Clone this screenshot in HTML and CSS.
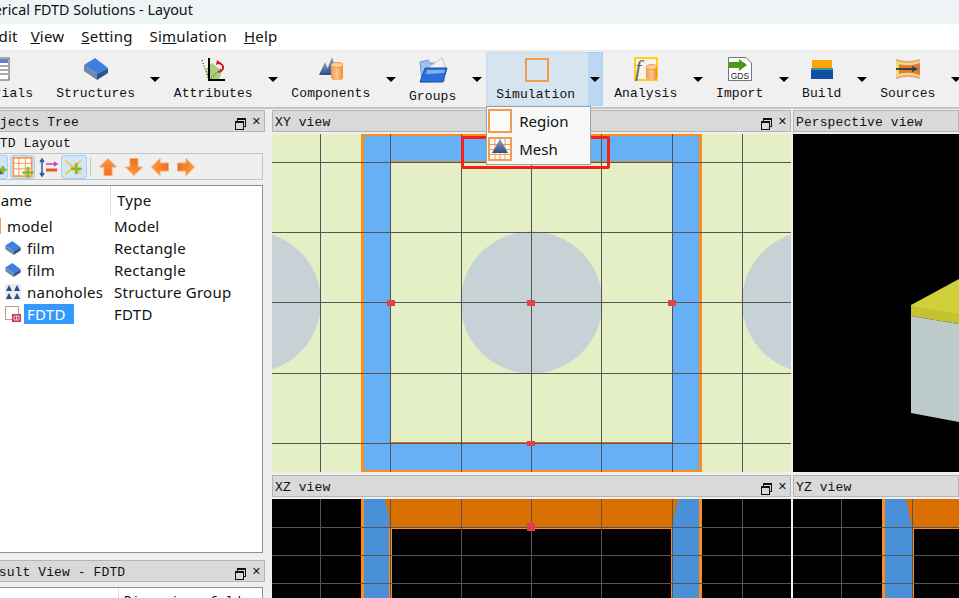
FILE: index.html
```html
<!DOCTYPE html>
<html lang="en">
<head>
    <meta charset="UTF-8">
    <meta name="viewport" content="width=device-width, initial-scale=1.0">
    <title>Lumerical FDTD Solutions - Layout</title>
    <link rel="stylesheet" href="styles.css">
</head>
<body>
    <svg class="defs" width="0" height="0">
        <defs>
            <linearGradient id="arrowFill" x1="0" y1="0" x2="0" y2="1">
                <stop offset="0" stop-color="#fb9a3c"/>
                <stop offset="1" stop-color="#ee6f1c"/>
            </linearGradient>
            <linearGradient id="cylFill" x1="0" y1="0" x2="1" y2="0">
                <stop offset="0" stop-color="#f59a4c"/>
                <stop offset="0.5" stop-color="#fcc48c"/>
                <stop offset="1" stop-color="#f08a34"/>
            </linearGradient>
            <linearGradient id="triFill" x1="0" y1="0" x2="0" y2="1">
                <stop offset="0" stop-color="#8fa5c9"/>
                <stop offset="1" stop-color="#2f4d85"/>
            </linearGradient>
            <symbol id="box" viewBox="0 0 24 22">
                <polygon points="0,7 11,0 24,10 13,16" fill="#3e7fe0"/>
                <polygon points="0,7 13,16 13,22 0,13" fill="#7287a8"/>
                <polygon points="13,16 24,10 24,15 13,22" fill="#2f5488"/>
            </symbol>
            <symbol id="arrow" viewBox="0 0 18 18">
                <polygon points="9,0.500 17.500,9 13,9 13,17.500 5,17.500 5,9 0.500,9" fill="url(#arrowFill)" stroke="#f7a878"/>
            </symbol>
        </defs>
    </svg>

    <div class="titlebar"><span class="title-text">Lumerical FDTD Solutions - Layout</span></div>

    <nav class="menubar">
        <span class="menu menu-file">Edit</span>
        <span class="menu"><u>V</u>iew</span>
        <span class="menu"><u>S</u>etting</span>
        <span class="menu">Si<u>m</u>ulation</span>
        <span class="menu"><u>H</u>elp</span>
    </nav>

    <div class="toolbar">
        <div class="tool tool-first">
            <svg class="tool-icon" viewBox="0 0 24 24">
                <rect x="1" y="1" width="22" height="22" fill="#fff" stroke="#555"/>
                <rect x="2" y="2" width="20" height="4" fill="#5b83c9"/>
                <path d="M2 9h20M2 13h20M2 17h20" stroke="#aaa" stroke-width="2"/>
            </svg>
            <span class="tool-label">Materials</span>
        </div>

        <div class="tool">
            <svg class="tool-icon" viewBox="0 0 24 24"><use href="#box" y="1" width="24" height="22"/></svg>
            <span class="tool-label">Structures</span>
        </div>
        <div class="drop"><i class="caret"></i></div>

        <div class="tool">
            <svg class="tool-icon" viewBox="0 0 24 24">
                <polygon points="5,12 11,6 16,10 21,14 18,23 7,23" fill="#a8d07c"/>
                <path d="M8 1v22h17" fill="none" stroke="#000" stroke-width="2"/>
                <path d="M1 3l7 20M8 23l13-12" fill="none" stroke="#000" stroke-dasharray="1 2"/>
                <path d="M16 6a5 4 0 1 1 1 9" fill="none" stroke="#d0161c" stroke-width="2"/>
                <polygon points="16,3 20,6 15,8" fill="#d0161c"/>
            </svg>
            <span class="tool-label">Attributes</span>
        </div>
        <div class="drop"><i class="caret"></i></div>

        <div class="tool">
            <svg class="tool-icon" viewBox="0 0 24 24">
                <polygon points="0,18 6,5 12,18" fill="url(#triFill)"/>
                <polygon points="6,18 13,0 19,18" fill="url(#triFill)"/>
                <rect x="12" y="6" width="12" height="17" rx="3" fill="url(#cylFill)"/>
                <ellipse cx="18" cy="8" rx="6" ry="2.500" fill="#fbd09c" stroke="#f0953f"/>
            </svg>
            <span class="tool-label">Components</span>
        </div>
        <div class="drop"><i class="caret"></i></div>

        <div class="tool tool-groups">
            <svg class="tool-icon folder-icon" viewBox="0 0 30 28">
                <polygon points="2,5 10,3 12,6 25,6 26,24 4,25" fill="#9ec2e8" stroke="#6b9ad0"/>
                <polygon points="11,10 24,1 28,12 18,16" fill="#eef2f7" stroke="#b9c4d2"/>
                <polygon points="7,11 29,11 25,25 2,25" fill="#2a6fdc" stroke="#1d4fa8"/>
                <polygon points="9,13 27,13 26,16 8,17" fill="#7fb2f0"/>
            </svg>
            <span class="tool-label">Groups</span>
        </div>
        <div class="drop drop-groups"><i class="caret"></i></div>

        <div class="tool tool-active">
            <span class="sim-icon"></span>
            <span class="tool-label">Simulation</span>
            <div class="popup">
                <div class="popup-item">
                    <span class="sim-icon sim-icon-small"></span>
                    <span>Region</span>
                </div>
                <div class="popup-item">
                    <svg class="popup-icon" viewBox="0 0 24 24">
                        <rect x="1" y="1" width="22" height="22" fill="#fafafa" stroke="#f59a4c" stroke-width="2"/>
                        <path d="M1 7.500h22M1 12.500h22M1 17.500h22M7 1v22M12 1v22M17 1v22" stroke="#f59a4c"/>
                        <polygon points="12,2 20,16 4,16" fill="url(#triFill)"/>
                    </svg>
                    <span>Mesh</span>
                </div>
            </div>
        </div>
        <div class="drop drop-active"><i class="caret"></i></div>

        <div class="tool">
            <svg class="tool-icon" viewBox="0 0 24 24">
                <rect x="1" y="1" width="22" height="22" fill="#f6f4ea" stroke="#fbd21e" stroke-width="2"/>
                <text x="1" y="19" class="f-glyph">f</text>
                <rect x="12" y="9" width="11" height="14" rx="3" fill="url(#cylFill)"/>
                <ellipse cx="17.500" cy="10" rx="5.500" ry="2.500" fill="#fbd09c" stroke="#f0953f"/>
            </svg>
            <span class="tool-label">Analysis</span>
        </div>
        <div class="drop"><i class="caret"></i></div>

        <div class="tool">
            <svg class="tool-icon" viewBox="0 0 24 24">
                <polygon points="0.500,0.500 18,0.500 23.500,6 23.500,23.500 0.500,23.500" fill="#fff" stroke="#777"/>
                <polygon points="1,5 11,5 11,2 19,8 11,14 11,11 1,11" fill="#4f9a12"/>
                <text x="12" y="22" class="gds-glyph">GDS</text>
            </svg>
            <span class="tool-label">Import</span>
        </div>
        <div class="drop"><i class="caret"></i></div>

        <div class="tool">
            <svg class="tool-icon" viewBox="0 0 24 24">
                <rect x="2" y="3" width="20" height="8" fill="#ffa40e"/>
                <rect x="1" y="11" width="22" height="2" fill="#2d9f86"/>
                <rect x="1" y="13" width="22" height="9" fill="#124da6"/>
            </svg>
            <span class="tool-label">Build</span>
        </div>
        <div class="drop"><i class="caret"></i></div>

        <div class="tool">
            <svg class="tool-icon" viewBox="0 0 24 24">
                <path d="M0 2q12 4 24 0v20q-12-4-24 0z" fill="#eaa688"/>
                <path d="M0 4q12 4 24 0v16q-12-4-24 0z" fill="#f2dc6c"/>
                <path d="M3 7q9 3 21 -1v12q-12-4-21 -1z" fill="#e07a3a"/>
                <path d="M0 11h16v-2l6 3-6 3v-2H0z" fill="#33414f"/>
            </svg>
            <span class="tool-label">Sources</span>
        </div>
        <div class="drop"><i class="caret"></i></div>
    </div>

    <main class="workspace">
        <aside class="sidebar">
            <div class="dock-title dock-title-side">
                <span class="side-text">Objects Tree</span>
                <span class="dock-buttons"><i class="float-btn"></i><span class="close-btn">&#10005;</span></span>
            </div>
            <div class="layout-name">FDTD Layout</div>
            <div class="tree-tools">
                <span class="tree-btn">
                    <svg viewBox="0 0 24 24"><polygon points="12,4 21,20 3,20" fill="url(#triFill)"/><path d="M16 15h8M20 11v8" stroke="#8ab82c" stroke-width="3"/></svg>
                </span>
                <span class="tree-btn">
                    <svg viewBox="0 0 24 24">
                        <rect x="2" y="2" width="20" height="20" fill="#fafafa" stroke="#f59a4c" stroke-width="2"/>
                        <path d="M2 8h20M2 14h20M8 2v20M15 2v20" stroke="#f59a4c"/>
                        <path d="M12 18h12M18 12v12" stroke="#8ab82c" stroke-width="3"/>
                    </svg>
                </span>
                <span class="tree-plain">
                    <svg viewBox="0 0 20 20">
                        <path d="M3 3v15M1 5l2-3 2 3M1 16l2 3 2-3" fill="none" stroke="#2f5a9a" stroke-width="1.500"/>
                        <path d="M7 7h11M15 5l3 2-3 2" fill="none" stroke="#c83cc8" stroke-width="1.500"/>
                        <path d="M7 13h11" stroke="#e05a1e" stroke-width="3"/>
                    </svg>
                </span>
                <span class="tree-btn tree-btn-add">
                    <svg viewBox="0 0 24 24">
                        <path d="M3 5l17 14M3 20L20 5" stroke="#f2cc2e" stroke-width="2"/>
                        <path d="M9 14h12M15 8v12" stroke="#8ab82c" stroke-width="3"/>
                    </svg>
                </span>
                <span class="tree-sep"></span>
                <svg class="move-icon"><use href="#arrow"/></svg>
                <svg class="move-icon flip-down"><use href="#arrow"/></svg>
                <svg class="move-icon flip-left"><use href="#arrow"/></svg>
                <svg class="move-icon flip-right"><use href="#arrow"/></svg>
            </div>
            <div class="tree">
                <div class="tree-head">
                    <span class="col-name head-name"><span class="head-text">Name</span></span>
                    <span class="col-type">Type</span>
                </div>
                <div class="tree-row">
                    <span class="col-name name-root"><i class="root-icon"></i>model</span>
                    <span class="col-type">Model</span>
                </div>
                <div class="tree-row">
                    <span class="col-name"><svg class="row-icon"><use href="#box" width="16" height="14" y="1"/></svg>film</span>
                    <span class="col-type">Rectangle</span>
                </div>
                <div class="tree-row">
                    <span class="col-name"><svg class="row-icon"><use href="#box" width="16" height="14" y="1"/></svg>film</span>
                    <span class="col-type">Rectangle</span>
                </div>
                <div class="tree-row">
                    <span class="col-name">
                        <svg class="row-icon" viewBox="0 0 16 16">
                            <rect width="16" height="16" fill="#e8ebef"/>
                            <path d="M4 1l3 6H1zM12 1l3 6H9zM4 9l3 6H1zM12 9l3 6H9z" fill="#2f4d85"/>
                        </svg>
                        nanoholes
                    </span>
                    <span class="col-type">Structure Group</span>
                </div>
                <div class="tree-row">
                    <span class="col-name">
                        <svg class="row-icon" viewBox="0 0 16 16">
                            <rect x="0.500" y="0.500" width="13" height="13" fill="#fff" stroke="#c49a84"/>
                            <rect x="7" y="8" width="9" height="8" fill="#b8405e"/>
                            <path d="M9 10h5v4H9zM11.500 10v4" fill="none" stroke="#e8c8d4"/>
                        </svg>
                        <span class="selected">FDTD</span>
                    </span>
                    <span class="col-type">FDTD</span>
                </div>
            </div>
            <div class="dock-title dock-title-side result-title">
                <span class="result-text">Result View - FDTD</span>
                <span class="dock-buttons"><i class="float-btn"></i><span class="close-btn">&#10005;</span></span>
            </div>
            <div class="result-table">
                <span class="result-col"></span>
                <span class="result-head">Dimension of ld</span>
            </div>
        </aside>

        <section class="views">
            <div class="view">
                <div class="dock-title">
                    <span>XY view</span>
                    <span class="dock-buttons"><i class="float-btn"></i><span class="close-btn">&#10005;</span></span>
                </div>
                <svg class="canvas canvas-top" viewBox="272 134 519 338" shape-rendering="crispEdges">
                    <rect x="272" y="134" width="519" height="338" fill="#e5efc5"/>
                    <path d="M361 134h341v338H361z" fill="#ff8c1a"/>
                    <path d="M364 136h335v334H364z" fill="#66b0f5"/>
                    <path d="M390 161h283v283H390z" fill="#e08a2a"/>
                    <path d="M391 163h281v280H391z" fill="#e5efc5"/>
                    <path d="M391 442h281v2H391z" fill="#f06a10"/>
                    <g shape-rendering="auto" fill="#c7d2d6">
                        <circle cx="250" cy="302" r="71"/>
                        <circle cx="531.500" cy="302.500" r="71"/>
                        <circle cx="813" cy="302" r="71"/>
                    </g>
                    <path d="M320.500 134v338M390.500 134v338M461.500 134v338M531.500 134v338M601.500 134v338M672.500 134v338M742.500 134v338M272 162.500h519M272 232.500h519M272 302.500h519M272 373.500h519M272 443.500h519" stroke="#555" fill="none"/>
                    <g fill="#e2404c">
                        <rect x="387" y="300" width="8" height="6"/>
                        <rect x="527" y="300" width="8" height="6"/>
                        <rect x="668" y="300" width="8" height="6"/>
                        <rect x="527" y="441" width="8" height="5"/>
                    </g>
                </svg>
            </div>
            <div class="view">
                <div class="dock-title"><span>Perspective view</span></div>
                <svg class="canvas canvas-top" viewBox="793 134 166 338">
                    <rect x="793" y="134" width="166" height="338" fill="#000"/>
                    <polygon points="911,305 959,279 959,316 911,308" fill="#cfd03a"/>
                    <polygon points="911,306 959,314 959,324 911,316" fill="#c5c232"/>
                    <polygon points="911,316 959,324 959,422 911,413" fill="#bccaca"/>
                </svg>
            </div>
            <div class="view">
                <div class="dock-title">
                    <span>XZ view</span>
                    <span class="dock-buttons"><i class="float-btn"></i><span class="close-btn">&#10005;</span></span>
                </div>
                <svg class="canvas canvas-bottom" viewBox="272 499 519 99" shape-rendering="crispEdges">
                    <rect x="272" y="499" width="519" height="99" fill="#000"/>
                    <rect x="361" y="499" width="31" height="99" fill="#ff8c1a"/>
                    <rect x="671" y="499" width="31" height="99" fill="#ff8c1a"/>
                    <rect x="364" y="499" width="25" height="99" fill="#4a90d9"/>
                    <rect x="673" y="499" width="26" height="99" fill="#4a90d9"/>
                    <rect x="389" y="499" width="283" height="28" fill="#d96f00"/>
                    <rect x="392" y="527" width="279" height="2" fill="#ff8c1a"/>
                    <g shape-rendering="auto" fill="#d96f00">
                        <polygon points="385,499 391,499 391,527"/>
                        <polygon points="678,499 672,499 672,527"/>
                    </g>
                    <path d="M320.500 499v99M390.500 499v99M461.500 499v99M531.500 499v99M601.500 499v99M672.500 499v99M742.500 499v99M272 527.500h519M272 555.500h519M272 583.500h519" stroke="#555" fill="none"/>
                    <rect x="527" y="523" width="8" height="8" fill="#e8385a"/>
                </svg>
            </div>
            <div class="view">
                <div class="dock-title"><span>YZ view</span></div>
                <svg class="canvas canvas-bottom" viewBox="793 499 166 99" shape-rendering="crispEdges">
                    <rect x="793" y="499" width="166" height="99" fill="#000"/>
                    <rect x="882" y="499" width="32" height="99" fill="#ff8c1a"/>
                    <rect x="885" y="499" width="27" height="99" fill="#4a90d9"/>
                    <rect x="913" y="499" width="46" height="28" fill="#d96f00"/>
                    <rect x="913" y="527" width="46" height="2" fill="#ff8c1a"/>
                    <polygon points="906,499 912,499 912,527" fill="#d96f00" shape-rendering="auto"/>
                    <path d="M841.500 499v99M912.500 499v99M793 527.500h166M793 555.500h166M793 583.500h166" stroke="#555" fill="none"/>
                </svg>
            </div>
        </section>
    </main>

    <div class="callout"></div>
</body>
</html>
```

FILE: styles.css
```css
* {
    box-sizing: border-box;
}
body {
    margin: 0;
    width: 959px;
    height: 598px;
    overflow: hidden;
    position: relative;
    display: flex;
    flex-direction: column;
    background-color: #efefef;
    font-family: "Noto Sans", sans-serif;
    color: #111;
}
.defs {
    position: absolute;
}

.titlebar {
    height: 24px;
    flex: none;
    background-color: #eff5f6;
    overflow: hidden;
    white-space: nowrap;
    font-size: 14.3px;
    line-height: 19px;
}
.title-text {
    display: block;
    margin-left: -36px;
}

.menubar {
    height: 27px;
    flex: none;
    display: flex;
    background-color: #fff;
    border-bottom: 1px solid #e8e8e8;
    font-size: 15px;
    letter-spacing: .2px;
    line-height: 25px;
    white-space: nowrap;
}
.menu {
    margin-right: 17px;
}
.menu-file {
    margin-left: -10px;
    margin-right: 13px;
}

.toolbar {
    height: 57px;
    flex: none;
    display: flex;
    margin-top: 1px;
    background-color: #f0f0f0;
    border-bottom: 2px solid #c4c4c4;
    font-family: "Liberation Mono", monospace;
    font-size: 13px;
    letter-spacing: .1px;
    white-space: nowrap;
}
.tool {
    flex: none;
    height: 54px;
    padding: 5px 10px 0;
    display: flex;
    flex-direction: column;
    align-items: center;
    position: relative;
}
.tool-first {
    margin-left: -48px;
    margin-right: 3px;
}
.tool-icon {
    width: 24px;
    height: 24px;
    flex: none;
}
.tool-label {
    margin-top: 5px;
    line-height: 16px;
}
.folder-icon {
    width: 30px;
    height: 28px;
}
.tool-groups .tool-label {
    margin-top: 4px;
}
.drop {
    flex: none;
    width: 18.6px;
    height: 54px;
    padding-top: 25px;
    padding-left: 2px;
    display: flex;
    justify-content: center;
}
.caret {
    width: 0;
    height: 0;
    border-left: 5px solid transparent;
    border-right: 5px solid transparent;
    border-top: 5px solid #000;
}
.drop-groups {
    width: 19.8px;
}
.tool-active {
    padding: 5px 13px 0 9px;
    background-color: #d6e4f0;
    border: 1px solid #c2dcf2;
    border-right: none;
}
.tool-active .sim-icon {
    margin-left: 3px;
}
.drop-active {
    width: 15px;
    padding-top: 24px;
    padding-left: 0;
    background-color: #bcd8f0;
    border: 1px solid #a6d0f4;
    border-left: none;
    margin-right: 1px;
}
.sim-icon {
    width: 24px;
    height: 24px;
    flex: none;
    border: 2px solid #f59a4c;
    display: block;
}
.tool-active .popup .sim-icon {
    margin-left: 0;
}
.sim-icon-small {
    background-color: #fafafa;
}

.popup {
    position: absolute;
    z-index: 2;
    top: 53px;
    left: -1px;
    width: 105px;
    height: 59px;
    padding: 2px 1px;
    background-color: #f8f8f8;
    border: 1px solid #a0a0a0;
    font-family: "Noto Sans", sans-serif;
    font-size: 15px;
    letter-spacing: 0;
}
.popup-item {
    height: 28px;
    display: flex;
    align-items: flex-start;
    gap: 7px;
    line-height: 25px;
}
.popup-icon {
    width: 24px;
    height: 24px;
    flex: none;
}

.workspace {
    flex: 1;
    min-height: 0;
    display: flex;
    padding-top: 1px;
}
.sidebar {
    width: 272px;
    flex: none;
    overflow: hidden;
}
.dock-title {
    height: 22px;
    display: flex;
    align-items: center;
    justify-content: space-between;
    padding: 2px 0 0 2px;
    background-color: #d9d9d9;
    border: 1px solid #b4b4b4;
    font-family: "Liberation Mono", monospace;
    font-size: 13px;
    letter-spacing: .1px;
    white-space: nowrap;
    overflow: hidden;
}
.dock-title-side {
    width: 265px;
    border-left: none;
    padding-left: 0;
}
.side-text {
    margin-left: -16px;
}
.dock-buttons {
    display: flex;
    align-items: center;
    gap: 7px;
    margin-right: 3px;
}
.float-btn {
    width: 9px;
    height: 9px;
    position: relative;
}
.float-btn::before,
.float-btn::after {
    content: "";
    position: absolute;
    width: 7px;
    height: 6px;
    border: 1px solid #111;
    border-top-width: 2px;
    background-color: #d9d9d9;
}
.float-btn::before {
    top: 0;
    left: 2px;
}
.float-btn::after {
    top: 3px;
    left: 0;
}
.close-btn {
    font-size: 11px;
    font-weight: bold;
    line-height: 12px;
    margin-left: 1px;
    font-family: "DejaVu Sans", sans-serif;
    color: #111;
}

.layout-name {
    height: 21px;
    margin-left: -16px;
    font-family: "Liberation Mono", monospace;
    font-size: 13px;
    letter-spacing: .1px;
    line-height: 23px;
    white-space: nowrap;
}
.tree-tools {
    width: 280px;
    height: 27px;
    display: flex;
    align-items: center;
    margin-left: -17px;
    border: 1px solid #c4c4c4;
    border-left: none;
}
.tree-btn {
    width: 25px;
    height: 24px;
    flex: none;
    background-color: #d2e6f7;
    border: 1px solid #a6d0f4;
    border-radius: 3px;
    margin-right: 2px;
    display: block;
}
.tree-btn svg {
    display: block;
    width: 23px;
    height: 22px;
}
.tree-plain {
    width: 20px;
    height: 20px;
    flex: none;
    margin: 0 2px 0 2px;
}
.tree-plain svg {
    display: block;
}
.tree-btn-add {
    width: 26px;
    margin-right: 3px;
}
.tree-sep {
    width: 1px;
    height: 20px;
    background-color: #c8c8c8;
    margin-right: 8px;
    flex: none;
}
.move-icon {
    width: 18px;
    height: 18px;
    flex: none;
    margin-right: 8px;
}
.flip-down {
    transform: rotate(180deg);
}
.flip-left {
    transform: rotate(-90deg);
}
.flip-right {
    transform: rotate(90deg);
}
.tree {
    width: 263px;
    height: 368px;
    margin-top: 5px;
    background-color: #fff;
    border: 1px solid #8a9299;
    border-left: none;
    font-size: 15px;
    letter-spacing: .25px;
    white-space: nowrap;
    overflow: hidden;
}
.tree-head {
    height: 29px;
    display: flex;
    align-items: flex-start;
}
.tree-head .col-name {
    height: 29px;
    width: 111px;
    margin-right: 6px;
    padding-left: 0;
    border-right: 1px solid #dedede;
    align-items: flex-start;
    line-height: 28px;
}
.tree-head .col-type {
    line-height: 28px;
}
.head-text {
    margin-left: -11px;
}
.tree-row {
    height: 22px;
    display: flex;
    align-items: center;
    line-height: 22px;
}
.col-name {
    width: 114px;
    flex: none;
    display: flex;
    align-items: center;
    padding-left: 5px;
}
.name-root {
    padding-left: 0;
}
.root-icon {
    width: 1px;
    height: 16px;
    background-color: #f59a4c;
    margin-right: 6px;
}
.row-icon {
    width: 16px;
    height: 16px;
    flex: none;
    margin-right: 6px;
}
.selected {
    background-color: #3399ff;
    color: #fff;
    width: 50px;
    height: 20px;
    line-height: 20px;
    margin-left: -3px;
    padding-left: 3px;
}
.result-title {
    margin-top: 7px;
}
.result-text {
    margin-left: -17px;
}
.result-table {
    width: 263px;
    height: 30px;
    margin-top: 5px;
    background-color: #fff;
    border: 1px solid #8a9299;
    border-left: none;
    display: flex;
    font-family: "Liberation Mono", monospace;
    font-size: 13px;
    line-height: 15px;
    white-space: nowrap;
}
.result-col {
    width: 119px;
    border-right: 1px solid #dedede;
}
.result-head {
    padding-left: 5px;
    padding-top: 6px;
}

.views {
    flex: 1;
    min-width: 0;
    display: grid;
    grid-template-columns: 519px 1fr;
    grid-template-rows: 362px auto;
    column-gap: 2px;
    row-gap: 3px;
    background-color: #efefef;
}
.view {
    overflow: hidden;
    min-width: 0;
}
.canvas {
    display: block;
    width: 100%;
    margin-top: 2px;
}
.canvas-top {
    height: 338px;
}
.canvas-bottom {
    height: 99px;
}
.f-glyph {
    font-family: "Liberation Serif", serif;
    font-style: italic;
    font-size: 23px;
    fill: #666;
}
.gds-glyph {
    font-family: "Liberation Sans", sans-serif;
    font-size: 8.5px;
    text-anchor: middle;
    fill: #222;
}

.callout {
    position: absolute;
    left: 461px;
    top: 136px;
    width: 149px;
    height: 33px;
    border: 3px solid #f5201a;
    border-radius: 2px;
}
```
